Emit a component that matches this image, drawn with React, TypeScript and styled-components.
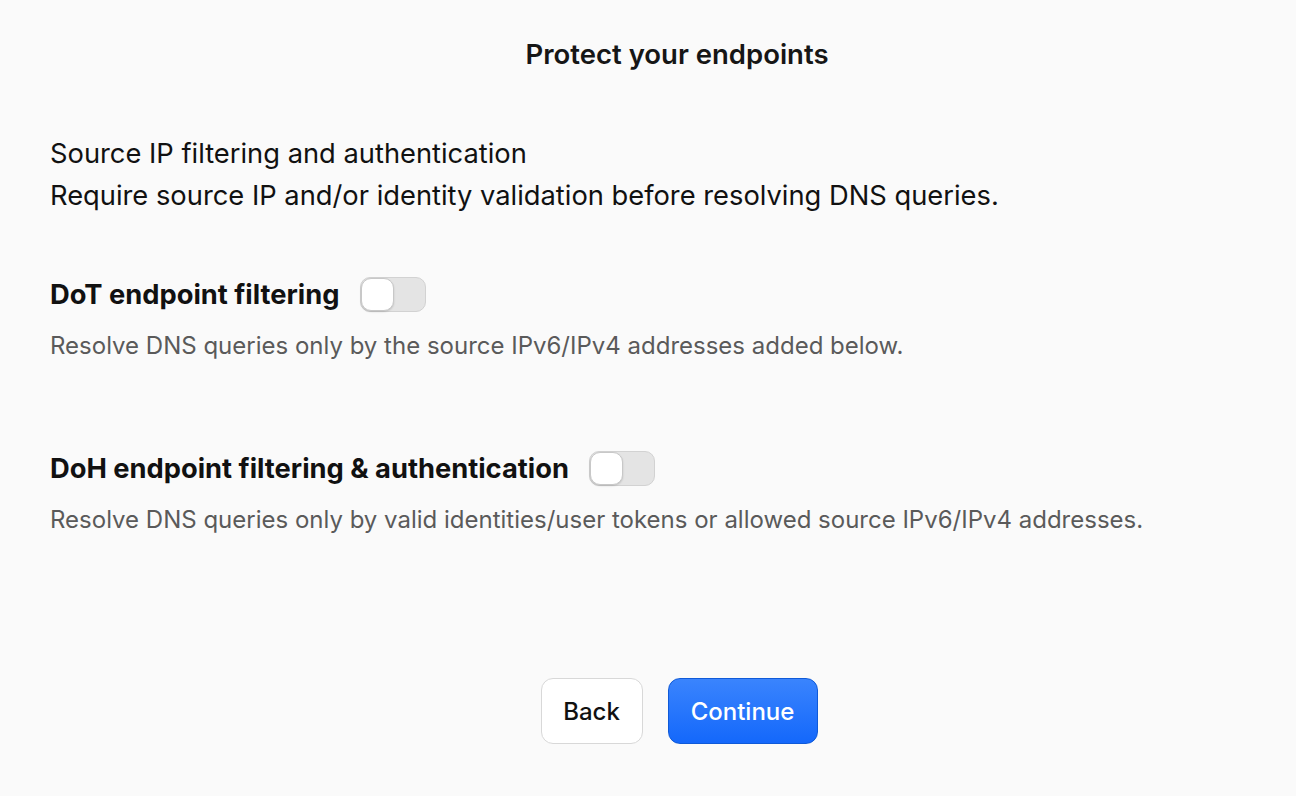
import React from "react";
import styled, { createGlobalStyle } from "styled-components";

const Global = createGlobalStyle`
  html, body { margin: 0; padding: 0; background: #fafafa; }
  body { font-family: Inter, "Noto Sans", sans-serif; color: #111; }
`;

const Page = styled.div`
  width: 1296px;
  height: 796px;
  box-sizing: border-box;
  padding: 35px 50px 0;
  display: flex;
  flex-direction: column;
  background: #fafafa;
`;

const Title = styled.h1`
  margin: 0;
  text-align: center;
  font-size: 27.5px;
  font-weight: 600;
  line-height: 38px;
  color: #161616;
  padding-left: 58px;
`;

const Intro = styled.div`
  margin-top: 60px;
  font-size: 27.3px;
  line-height: 42px;
  color: #111;
`;

const Section = styled.section<{ $top: number }>`
  margin-top: ${(p) => p.$top}px;
  display: flex;
  flex-direction: column;
`;

const HeadRow = styled.div`
  display: flex;
  align-items: center;
  gap: 20px;
  height: 36px;
`;

const Heading = styled.h2`
  margin: 0;
  font-size: 27.3px;
  font-weight: 700;
  color: #111;
`;

const Desc = styled.p`
  margin: 19px 0 0;
  font-size: 24px;
  line-height: 30px;
  color: #5a5a5a;
`;

const Track = styled.span`
  position: relative;
  display: inline-block;
  flex: none;
  width: 66px;
  height: 35px;
  box-sizing: border-box;
  border-radius: 10px;
  background: #e4e4e4;
  border: 1px solid #d2d2d2;
`;

const Knob = styled.span`
  position: absolute;
  left: 0;
  top: 0;
  width: 33px;
  height: 33px;
  box-sizing: border-box;
  border-radius: 10px;
  background: #fff;
  border: 1px solid #c8c8c8;
  box-shadow: 0 1px 2px rgba(0, 0, 0, 0.15);
`;

const Actions = styled.div`
  margin-top: auto;
  margin-bottom: 52px;
  display: flex;
  justify-content: center;
  gap: 25px;
  padding-left: 62px;
`;

const Button = styled.button<{ $primary?: boolean }>`
  height: 66px;
  width: ${(p) => (p.$primary ? 150 : 102)}px;
  padding: 0;
  border-radius: 12px;
  font-family: Inter, "Noto Sans", sans-serif;
  font-size: 24px;
  font-weight: 500;
  cursor: pointer;
  background: ${(p) => (p.$primary ? "linear-gradient(#3a84fd, #1468fb)" : "#fff")};
  color: ${(p) => (p.$primary ? "#fff" : "#111")};
  border: 1px solid ${(p) => (p.$primary ? "#0f5ad8" : "#d8d8d8")};
`;

function Toggle() {
  return (
    <Track role="switch" aria-checked={false}>
      <Knob />
    </Track>
  );
}

export default function App() {
  return (
    <>
      <Global />
      <Page>
        <Title>Protect your endpoints</Title>
        <Intro>
          Source IP filtering and authentication
          <br />
          Require source IP and/or identity validation before resolving DNS queries.
        </Intro>
        <Section $top={59}>
          <HeadRow>
            <Heading>DoT endpoint filtering</Heading>
            <Toggle />
          </HeadRow>
          <Desc>Resolve DNS queries only by the source IPv6/IPv4 addresses added below.</Desc>
        </Section>
        <Section $top={89}>
          <HeadRow>
            <Heading>DoH endpoint filtering &amp; authentication</Heading>
            <Toggle />
          </HeadRow>
          <Desc>Resolve DNS queries only by valid identities/user tokens or allowed source IPv6/IPv4 addresses.</Desc>
        </Section>
        <Actions>
          <Button>Back</Button>
          <Button $primary>Continue</Button>
        </Actions>
      </Page>
    </>
  );
}
